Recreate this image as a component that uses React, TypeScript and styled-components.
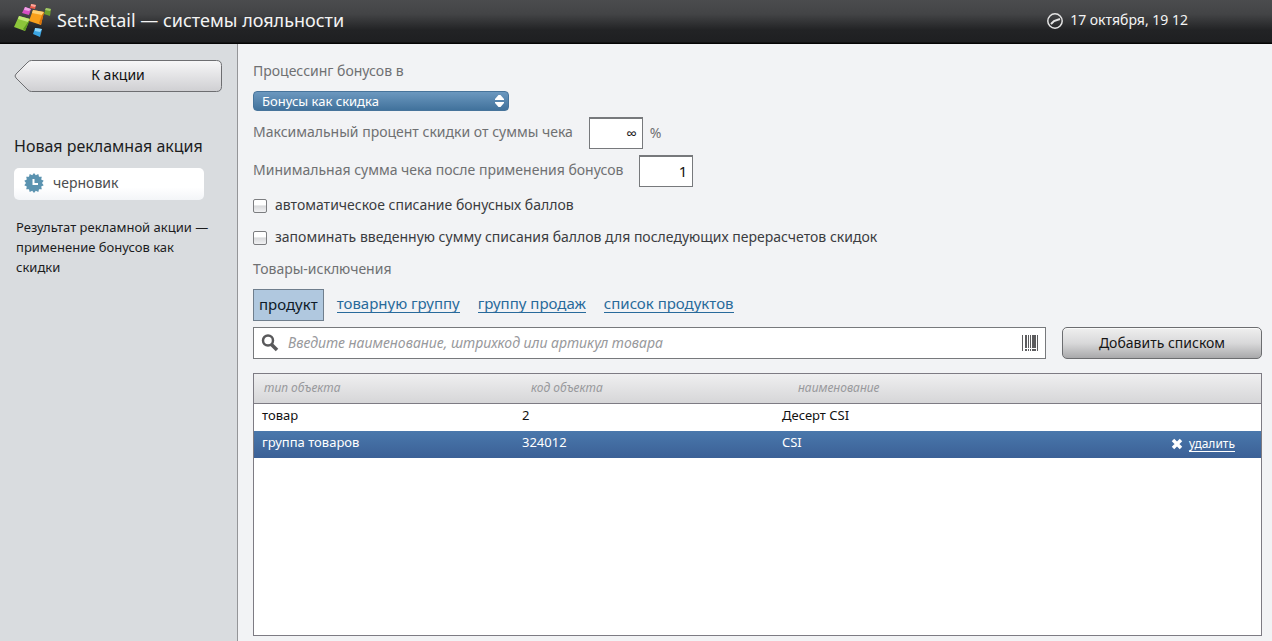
import React, { useState } from "react";
import styled, { createGlobalStyle, css } from "styled-components";

const GlobalStyle = createGlobalStyle`
  *, *::before, *::after { box-sizing: border-box; }
  body {
    margin: 0;
    background: #f2f3f5;
    color: #1c1c1e;
    font-family: "Noto Sans", "Open Sans", sans-serif;
    font-size: 14px;
    line-height: 20px;
  }
  button, input, select { font: inherit; }
`;

const Page = styled.div`
  display: flex;
  flex-direction: column;
  min-height: 100vh;
`;

const Header = styled.header`
  display: flex;
  align-items: center;
  height: 44px;
  padding: 0 84px 4px 13px;
  color: #f4f4f4;
  background: linear-gradient(#4b4c4e 0, #434446 14px, #222325 30px, #1e1f21 42px, #050505 43px);
`;

const Title = styled.h1`
  flex: 1;
  margin: 0 0 0 6px;
  font-size: 18px;
  font-weight: 400;
  line-height: 24px;
`;

const DateTime = styled.div`
  display: flex;
  align-items: center;
  gap: 6px;
`;

const Body = styled.div`
  display: flex;
  flex: 1;
`;

const Sidebar = styled.aside`
  flex: 0 0 238px;
  padding: 15px 15px 15px 14px;
  background: #d9dcdf;
  border-right: 1px solid #949598;
`;

const BackButton = styled.button`
  display: grid;
  width: 100%;
  height: 34px;
  padding: 0;
  color: #111;
  background: none;
  border: 0;
  cursor: pointer;
  > * { grid-area: 1 / 1; }
`;

const BackShape = styled.svg`
  width: 100%;
  height: 34px;
`;

const BackLabel = styled.span`
  align-self: center;
  padding-bottom: 3px;
`;

const SideTitle = styled.h2`
  margin: 42px 0 11px;
  font-size: 16px;
  font-weight: 400;
  line-height: 22px;
  white-space: nowrap;
`;

const Status = styled.div`
  display: flex;
  align-items: center;
  gap: 9px;
  width: 190px;
  height: 32px;
  padding: 0 10px 2px;
  color: #4c4d50;
  background: linear-gradient(#fff 60%, #f3f5f8);
  border-radius: 5px;
`;

const Summary = styled.p`
  max-width: 200px;
  margin: 17px 0 0 2px;
  font-size: 13px;
`;

const Main = styled.main`
  display: flex;
  flex: 1;
  flex-direction: column;
  min-width: 0;
  padding: 17px 10px 5px 15px;
  background: #f2f3f5;
`;

const labelText = css`
  color: #6f7072;
`;

const FieldLabel = styled.label`
  ${labelText}
`;

const SelectBox = styled.span`
  display: grid;
  align-items: center;
  width: 256px;
  margin: 10px 0 6px;
  > * { grid-area: 1 / 1; }
  > svg { justify-self: end; margin-right: 5px; pointer-events: none; }
`;

const Select = styled.select`
  appearance: none;
  width: 100%;
  height: 20px;
  padding: 0 24px 0 8px;
  color: #fff;
  font-size: 13px;
  line-height: 18px;
  background: linear-gradient(#6c98bf, #41729c);
  border: 1px solid #47749b;
  border-radius: 4px;
`;

const FieldRow = styled.div`
  display: flex;
  align-items: center;
  gap: 16px;
  height: 32px;
  margin-bottom: 6px;
  > label { padding-bottom: 2px; }
`;

const NumberBox = styled.input`
  width: 54px;
  height: 32px;
  padding: 0 5px 2px;
  color: #111;
  font-size: 15px;
  text-align: right;
  background: #fff;
  border: 1px solid #77797c;
  border-top-width: 2px;
  border-radius: 0;
`;

const Unit = styled.span`
  ${labelText}
  margin-left: -9px;
`;

const Checks = styled.div`
  margin-top: -3px;
`;

const CheckRow = styled.label`
  display: flex;
  align-items: center;
  gap: 8px;
  height: 32px;
  color: #3b3c3f;
`;

const CheckText = styled.span`
  padding-bottom: 2px;
`;

const CheckBox = styled.input`
  appearance: none;
  width: 14px;
  height: 14px;
  margin: 0;
  background: linear-gradient(#fff 0 40%, #d8d9db 50%, #f2f2f4);
  border: 1px solid #7c7d80;
  border-radius: 2px;
  &:checked { background: #41729c; }
`;

const SectionTitle = styled.h2`
  ${labelText}
  margin: 5px 0 10px;
  font-size: 14px;
  font-weight: 400;
  line-height: 20px;
`;

const Tabs = styled.nav`
  display: flex;
  align-items: center;
  gap: 13px;
  margin-bottom: 6px;
  font-size: 15px;
`;

const ActiveTab = styled.button`
  height: 32px;
  padding: 0 5px 3px;
  color: #0e1a28;
  background: #b0c8df;
  border: 1px solid #6f7e8d;
`;

const TabLinks = styled.div`
  display: flex;
  gap: 18px;
  padding-bottom: 2px;
`;

const TabLink = styled.a`
  color: #286a9b;
  text-decoration: none;
  line-height: 17px;
  border-bottom: 1px solid #286a9b;
`;

const SearchRow = styled.div`
  display: flex;
  gap: 16px;
  margin-bottom: 14px;
`;

const SearchBox = styled.label`
  display: flex;
  flex: 1;
  align-items: center;
  gap: 9px;
  height: 32px;
  padding: 0 7px;
  background: #fff;
  border: 1px solid #77797c;
`;

const SearchInput = styled.input`
  flex: 1;
  min-width: 0;
  padding: 0;
  background: none;
  border: 0;
  outline: 0;
  &::placeholder { color: #98999c; font-style: italic; opacity: 1; }
`;

const AddButton = styled.button`
  width: 200px;
  height: 32px;
  padding: 0;
  color: #161616;
  background: linear-gradient(#efefef, #d9d9da 50%, #a9a9ab);
  border: 1px solid #6c6d70;
  border-radius: 5px;
  box-shadow: inset 0 1px 0 #fafafa;
`;

const TablePanel = styled.div`
  flex: 1;
  background: #fff;
  border: 1px solid #7d7b83;
`;

const Table = styled.table`
  width: 100%;
  table-layout: fixed;
  border-collapse: collapse;
  font-size: 13px;
`;

const HeadRow = styled.tr`
  height: 30px;
  background: linear-gradient(#efeff0, #d6d6d8 29px, #7d7b83 29px);
`;

const HeadCell = styled.th<{ $inset: number; $width?: number }>`
  width: ${(p) => (p.$width ? `${p.$width}px` : "auto")};
  padding: 0 0 3px ${(p) => p.$inset}px;
  color: #98999c;
  font-size: 12px;
  font-style: italic;
  font-weight: 400;
  text-align: left;
`;

const Row = styled.tr<{ $selected: boolean }>`
  height: 27px;
  color: ${(p) => (p.$selected ? "#fff" : "#111")};
  background: ${(p) => (p.$selected ? "linear-gradient(#4a78ac, #3b6096)" : "#fff")};
`;

const Cell = styled.td`
  padding: 0 0 6px 8px;
`;

const ActionCell = styled.td`
  padding: 0 26px 0 0;
  text-align: right;
`;

const DeleteLink = styled.a`
  display: inline-flex;
  align-items: center;
  gap: 6px;
  color: #fff;
  text-decoration: none;
`;

const DeleteText = styled.span`
  font-size: 12px;
  line-height: 15px;
  border-bottom: 1px solid #fff;
`;

const Logo = () => (
  <svg width="38" height="38" viewBox="0 0 38 38" aria-hidden="true">
    <path d="M6 15 17 18 12 30 1 26Z" fill="#8cc63a" />
    <path d="M6 15 17 18 15 21 5 18Z" fill="#c0e67a" />
    <path d="M15 21 17 18 12 30 10 28Z" fill="#5c9a20" />
    <path d="M20 9 31 11 28 24 16 20Z" fill="#f9a01b" />
    <path d="M20 9 31 11 29 14 19 12Z" fill="#ffd072" />
    <path d="M29 14 31 11 28 24 26 22Z" fill="#d9720c" />
    <path d="M12 6 18 8 16 14 9 12Z" fill="#d64fc4" />
    <path d="M12 6 18 8 16 10 11 9Z" fill="#f0a0e6" />
    <path d="M18 3 23 4 22 8 17 7Z" fill="#ee5b4b" />
    <path d="M18 3 23 4 22 6 18 5Z" fill="#f9a79c" />
    <path d="M33 7 38 8 37 15 31 13Z" fill="#6f9f2e" />
    <path d="M33 7 38 8 37 10 32 9Z" fill="#a3c96a" />
    <path d="M22 27 29 28 27 36 20 33Z" fill="#3ba6e3" />
    <path d="M22 27 29 28 27 31 22 30Z" fill="#93d6f8" />
  </svg>
);

const ClockIcon = () => (
  <svg width="18" height="18" viewBox="0 0 18 18" fill="none" stroke="#e4e4e4" aria-hidden="true">
    <circle cx="9" cy="10" r="7.200" strokeWidth="1.500" />
    <path d="M5 13 8 10 14 8" strokeWidth="2" />
  </svg>
);

const badgePoints = Array.from({ length: 28 }, (_, i) => {
  const radius = i % 2 ? 8 : 10;
  const angle = (i * Math.PI) / 14;
  return `${(10 + radius * Math.sin(angle)).toFixed(1)},${(10 - radius * Math.cos(angle)).toFixed(1)}`;
}).join(" ");

const DraftIcon = () => (
  <svg width="20" height="20" viewBox="0 0 20 20" aria-hidden="true">
    <polygon points={badgePoints} fill="#5b93b0" />
    <path d="M9.500 6V11H14" fill="none" stroke="#fff" strokeWidth="2" />
  </svg>
);

const StepperIcon = () => (
  <svg width="9" height="12" viewBox="0 0 9 12" fill="#fff" aria-hidden="true">
    <path d="M3.500 0H5.500L9 4V5H0V4ZM0 7H9V8L5.500 12H3.500L0 8Z" />
  </svg>
);

const SearchIcon = () => (
  <svg width="18" height="18" viewBox="0 0 18 18" fill="none" stroke="#59595b" aria-hidden="true">
    <circle cx="7" cy="6.500" r="5" strokeWidth="2.500" />
    <path d="M10.500 10.500 16 16" strokeWidth="3.500" />
  </svg>
);

const BarcodeIcon = () => (
  <svg width="16" height="17" viewBox="0 0 16 17" fill="#5c5c5e" aria-hidden="true">
    <path d="M0 0h1v16H0zM3 0h2v13H3zM6 0h1v13H6zM8 0h1v13H8zM10 0h4v13h-4zM15 0h1v16h-1zM3 14h2v2H3zM6 14h1v2H6zM8 14h1v2H8zM10 14h4v2h-4z" />
  </svg>
);

const CrossIcon = () => (
  <svg width="12" height="12" viewBox="0 0 12 12" aria-hidden="true">
    <path d="M2 2 10 10M10 2 2 10" stroke="#fff" strokeWidth="3.500" />
  </svg>
);

const items = [
  { type: "товар", code: "2", name: "Десерт CSI" },
  { type: "группа товаров", code: "324012", name: "CSI" },
];

export default function App() {
  const [selected, setSelected] = useState(1);

  return (
    <Page>
      <GlobalStyle />
      <Header>
        <Logo />
        <Title>Set:Retail — системы лояльности</Title>
        <DateTime>
          <ClockIcon />
          <time>17 октября, 19 12</time>
        </DateTime>
      </Header>
      <Body>
        <Sidebar>
          <BackButton type="button">
            <BackShape viewBox="0 0 208 34" preserveAspectRatio="none" aria-hidden="true">
              <defs>
                <linearGradient id="back" x1="0" y1="0" x2="0" y2="1">
                  <stop offset="0" stopColor="#f7f7f8" />
                  <stop offset="1" stopColor="#cfcfd2" />
                </linearGradient>
              </defs>
              <path
                d="M17.500 1.500H202.500Q207.500 1.500 207.500 6.500V27.500Q207.500 32.500 202.500 32.500H17.500Q15.500 32.500 14 31L2 19Q0 17 2 15L14 3Q15.500 1.500 17.500 1.500Z"
                fill="url(#back)"
                stroke="#6d6e71"
              />
            </BackShape>
            <BackLabel>К акции</BackLabel>
          </BackButton>
          <SideTitle>Новая рекламная акция</SideTitle>
          <Status>
            <DraftIcon />
            черновик
          </Status>
          <Summary>Результат рекламной акции — применение бонусов как скидки</Summary>
        </Sidebar>
        <Main>
          <FieldLabel htmlFor="processing">Процессинг бонусов в</FieldLabel>
          <SelectBox>
            <Select id="processing">
              <option>Бонусы как скидка</option>
            </Select>
            <StepperIcon />
          </SelectBox>
          <FieldRow>
            <FieldLabel htmlFor="max">Максимальный процент скидки от суммы чека</FieldLabel>
            <NumberBox id="max" defaultValue="∞" />
            <Unit>%</Unit>
          </FieldRow>
          <FieldRow>
            <FieldLabel htmlFor="min">Минимальная сумма чека после применения бонусов</FieldLabel>
            <NumberBox id="min" defaultValue="1" />
          </FieldRow>
          <Checks>
            <CheckRow>
              <CheckBox type="checkbox" />
              <CheckText>автоматическое списание бонусных баллов</CheckText>
            </CheckRow>
            <CheckRow>
              <CheckBox type="checkbox" />
              <CheckText>
                запоминать введенную сумму списания баллов для последующих перерасчетов скидок
              </CheckText>
            </CheckRow>
          </Checks>
          <SectionTitle>Товары-исключения</SectionTitle>
          <Tabs>
            <ActiveTab type="button">продукт</ActiveTab>
            <TabLinks>
              <TabLink href="#group">товарную группу</TabLink>
              <TabLink href="#sales">группу продаж</TabLink>
              <TabLink href="#list">список продуктов</TabLink>
            </TabLinks>
          </Tabs>
          <SearchRow>
            <SearchBox>
              <SearchIcon />
              <SearchInput
                type="text"
                aria-label="Поиск товара"
                placeholder="Введите наименование, штрихкод или артикул товара"
              />
              <BarcodeIcon />
            </SearchBox>
            <AddButton type="button">Добавить списком</AddButton>
          </SearchRow>
          <TablePanel>
            <Table>
              <thead>
                <HeadRow>
                  <HeadCell $inset={10} $width={260}>тип объекта</HeadCell>
                  <HeadCell $inset={17} $width={260}>код объекта</HeadCell>
                  <HeadCell $inset={24}>наименование</HeadCell>
                  <HeadCell $inset={0} $width={120} aria-label="Действия" />
                </HeadRow>
              </thead>
              <tbody>
                {items.map((item, i) => (
                  <Row key={item.code} $selected={i === selected} onClick={() => setSelected(i)}>
                    <Cell>{item.type}</Cell>
                    <Cell>{item.code}</Cell>
                    <Cell>{item.name}</Cell>
                    <ActionCell>
                      {i === selected && (
                        <DeleteLink href="#delete">
                          <CrossIcon />
                          <DeleteText>удалить</DeleteText>
                        </DeleteLink>
                      )}
                    </ActionCell>
                  </Row>
                ))}
              </tbody>
            </Table>
          </TablePanel>
        </Main>
      </Body>
    </Page>
  );
}
